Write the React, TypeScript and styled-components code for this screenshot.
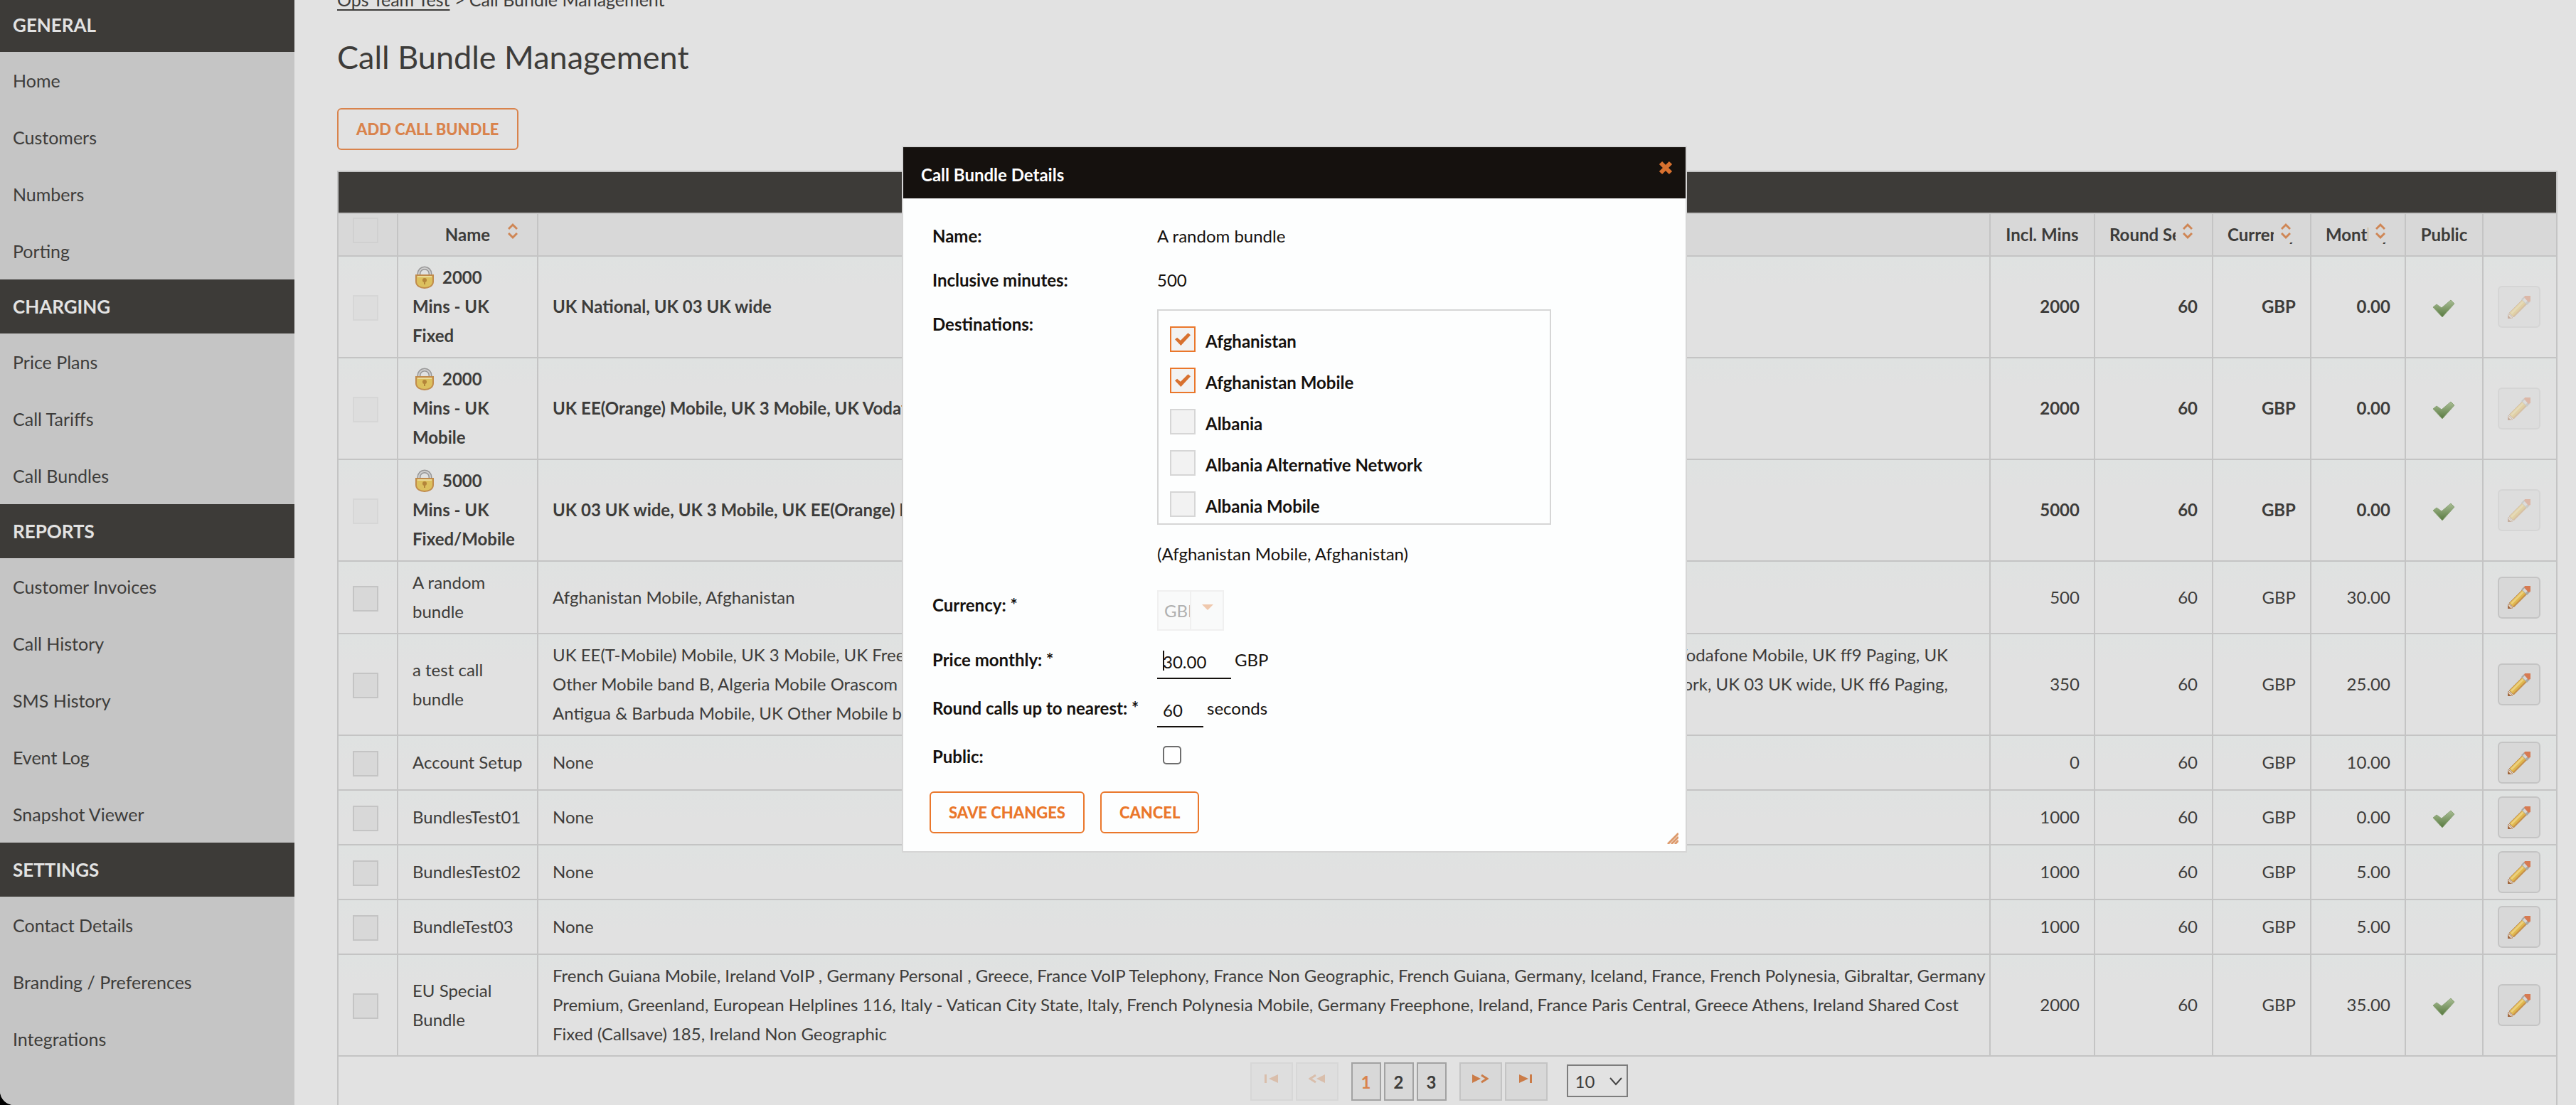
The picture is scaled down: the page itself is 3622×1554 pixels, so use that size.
import React from 'react';
import styled, { createGlobalStyle, css } from 'styled-components';

const c = {
  page: '#e2e2e2',
  side: '#c5c5c5',
  dark: '#3d3b38',
  line: '#c4c4c4',
  head: '#d8d8d8',
  text: '#3d3c3a',
  orange: '#d9834c',
  ink: '#15110e',
  vivid: '#ea772b',
};

const GlobalStyle = createGlobalStyle`
  html, body { margin: 0; background: #000; overflow: hidden; }
  * { box-sizing: border-box; }
  body, button, input, select {
    font-family: Lato, "Liberation Sans", sans-serif;
    font-size: 24px;
  }
  body { color: ${c.text}; line-height: 41px; }
`;

const Shell = styled.div`
  position: relative;
  display: flex;
  height: 100vh;
  overflow: hidden;
  background: ${c.page};
  border-bottom-left-radius: 20px;
`;

const Sidebar = styled.nav`
  flex: none;
  width: 414px;
  margin-top: -3px;
  background: ${c.side};
`;

const SideHeading = styled.h2`
  margin: 0;
  padding: 0 18px;
  background: ${c.dark};
  color: ${c.page};
  font-size: 26px;
  line-height: 76px;
  text-transform: uppercase;
`;

const SideLink = styled.a`
  display: block;
  padding: 0 18px;
  color: inherit;
  font-size: 25px;
  line-height: 80px;
  text-decoration: none;
`;

const Main = styled.main`
  flex: 1;
  min-width: 0;
  margin-top: -21px;
  padding: 0 26px 0 60px;
`;

const Crumbs = styled.div`
  font-size: 25px;
  a { color: inherit; text-underline-offset: 4px; }
`;

const Title = styled.h1`
  margin: 30px 0 42px;
  font-size: 45px;
  font-weight: 400;
  line-height: 60px;
`;

const OutlineButton = styled.button<{ $vivid?: boolean }>`
  height: 59px;
  padding: 0 25px;
  background: transparent;
  border: 2px solid ${p => (p.$vivid ? c.vivid : c.orange)};
  border-radius: 6px;
  color: ${p => (p.$vivid ? c.vivid : c.orange)};
  font-size: 22px;
  font-weight: 900;
  text-transform: uppercase;
`;

const Table = styled.table`
  width: 100%;
  margin-top: 29px;
  table-layout: fixed;
  border-collapse: collapse;
`;

const Caption = styled.th`
  height: 59px;
  padding: 0;
  background: ${c.dark};
  border: 2px solid ${c.line};
`;

const HeadCell = styled.th<{ $align?: string }>`
  position: relative;
  height: 60px;
  padding: 0 20px 2px;
  overflow: hidden;
  background: ${c.head};
  border: 2px solid ${c.line};
  text-align: ${p => p.$align || 'center'};
  white-space: nowrap;
`;

const SortButton = styled.button`
  position: absolute;
  top: 0;
  right: 0;
  width: 51px;
  height: 40px;
  padding: 7px 0 0 10px;
  background: ${c.head};
  border: 0;
  text-align: left;
  svg { display: block; }
`;

const Row = styled.tr<{ $locked?: boolean }>`
  font-weight: ${p => (p.$locked ? 700 : 400)};
`;

const Cell = styled.td<{ $align?: string; $tight?: boolean }>`
  padding: ${p => (p.$tight ? '8px 20px' : '8px 20px 10px')};
  background: linear-gradient(#dfe2e1, #e1e1e1 40px);
  border: 2px solid ${c.line};
  text-align: ${p => p.$align || 'left'};
  svg, input { vertical-align: middle; }
`;

const Line = styled.span`
  display: flex;
  white-space: nowrap;
`;

const WideLine = styled(Line)`
  padding-right: 38px;
`;

const Lead = styled.span`
  flex: 1;
  min-width: 0;
  overflow: hidden;
`;

const LockedName = styled(Line)`
  align-items: center;
  gap: 12px;
  padding-left: 4px;
`;

const tick = css`
  &:checked { border-color: ${c.vivid}; }
  &:checked::after {
    content: "";
    width: 22px;
    height: 18px;
    background: #d8712f;
    clip-path: polygon(0 52%, 14% 38%, 36% 60%, 84% 2%, 100% 18%, 38% 100%);
  }
`;

const TickBox = styled.input<{ $bright?: boolean }>`
  appearance: none;
  display: inline-flex;
  align-items: center;
  justify-content: center;
  flex: none;
  width: 36px;
  height: 36px;
  margin: 0;
  background: ${p => (p.$bright ? '#f2f2f2' : '#d8d8d8')};
  border: 2px solid ${p => (p.$bright ? '#d6d6d6' : c.line)};
  &:disabled { opacity: 0.35; }
  ${tick}
`;

const EditButton = styled.button`
  display: flex;
  align-items: center;
  justify-content: center;
  width: 60px;
  height: 59px;
  padding: 0;
  background: ${c.head};
  border: 2px solid ${c.line};
  border-radius: 6px;
  &:disabled { opacity: 0.4; }
`;

const PagerCell = styled.td`
  height: 100px;
  padding: 8px 24px 0 0;
  border: 2px solid ${c.line};
  vertical-align: top;
`;

const Pager = styled.div`
  display: flex;
  justify-content: center;
  gap: 18px;
`;

const PagerGroup = styled.div`
  display: flex;
  gap: 4px;
`;

const PagerButton = styled.button<{ $page?: boolean; $current?: boolean }>`
  display: flex;
  align-items: center;
  justify-content: center;
  width: ${p => (p.$page ? 42 : 60)}px;
  height: 54px;
  padding: 0;
  background: ${c.head};
  border: 2px solid ${p => (p.$page ? '#a2a2a2' : c.line)};
  color: ${p => (p.$current ? c.orange : c.text)};
  font-weight: 700;
  svg { margin-bottom: 8px; }
  &:disabled { opacity: 0.35; }
`;

const SizeBox = styled.div`
  position: relative;
  margin: 3px 0 0 9px;
  svg { position: absolute; top: 18px; right: 8px; pointer-events: none; }
`;

const SizeSelect = styled.select`
  appearance: none;
  display: block;
  width: 86px;
  height: 46px;
  padding: 0 10px;
  background: ${c.page};
  border: 2px solid #7d7d7d;
  border-radius: 0;
  color: ${c.text};
`;

const Overlay = styled.div`
  position: absolute;
  inset: 0;
  display: flex;
  align-items: flex-start;
  justify-content: center;
  padding: 205px 0 0 18px;
`;

const Dialog = styled.section`
  position: relative;
  width: 1104px;
  background: #fdfefe;
  border: 2px solid #d6d6d6;
  color: ${c.ink};
`;

const DialogBar = styled.header`
  display: flex;
  align-items: flex-start;
  justify-content: space-between;
  height: 72px;
  padding: 18px 18px 0 25px;
  background: ${c.ink};
  color: #fff;
`;

const DialogTitle = styled.h2`
  margin: 0;
  font-size: 24px;
`;

const CloseButton = styled.button`
  padding: 1px 0 0;
  background: none;
  border: 0;
  svg { display: block; }
`;

const Form = styled.form`
  padding: 32px 37px 25px;
`;

const Fields = styled.div`
  display: grid;
  grid-template-columns: 316px 554px;
  row-gap: 20px;
  padding-left: 4px;
  line-height: 42px;
`;

const FieldName = styled.label`
  font-weight: 700;
  white-space: nowrap;
`;

const CurrencyName = styled(FieldName)`
  margin-top: 10px;
`;

const Choices = styled.div`
  display: flex;
  flex-direction: column;
  gap: 16px;
  height: 303px;
  padding: 22px 16px 0;
  border: 2px solid #d6d6d6;
  overflow: hidden;
`;

const Choice = styled.label`
  display: flex;
  align-items: flex-start;
  gap: 14px;
  height: 42px;
  font-weight: 700;
  line-height: 42px;
`;

const CurrencyBox = styled.div`
  position: relative;
  width: 94px;
  margin-top: 10px;
  svg { position: absolute; top: 20px; right: 15px; }
  &::after {
    content: "";
    position: absolute;
    top: 2px;
    bottom: 2px;
    left: 46px;
    width: 2px;
    background: #f0f0f0;
  }
`;

const CurrencySelect = styled.select`
  appearance: none;
  display: block;
  width: 100%;
  height: 57px;
  padding: 0 46px 0 8px;
  background: #f9fafa;
  border: 2px solid #f0f0f0;
  border-radius: 0;
  color: #b0b0b0;
  opacity: 1;
`;

const Measure = styled.div`
  position: relative;
  display: flex;
  gap: 5px;
`;

const ShortInput = styled.input<{ $w: number }>`
  width: ${p => p.$w}px;
  height: 48px;
  padding: 0 8px;
  background: transparent;
  border: 0;
  border-bottom: 2px solid ${c.ink};
  color: ${c.ink};
  outline: 0;
`;

const Caret = styled.span`
  position: absolute;
  top: 8px;
  left: 8px;
  width: 2px;
  height: 28px;
  background: ${c.ink};
`;

const PublicBox = styled.input`
  appearance: none;
  width: 26px;
  height: 26px;
  margin: 6px 8px;
  background: #fff;
  border: 2px solid #6e6e6e;
  border-radius: 5px;
`;

const Actions = styled.div`
  display: flex;
  gap: 22px;
  margin-top: 28px;
`;

const Grip = styled.svg`
  position: absolute;
  right: 10px;
  bottom: 10px;
`;

const SortIcon = () => (
  <svg width="14" height="40" viewBox="0 0 14 40" fill="none" stroke="#cf8655" strokeWidth="3">
    <path d="M1 16 7 10 13 16M1 22 7 28 13 22" transform="translate(0 -2)" />
  </svg>
);

const LockIcon = () => (
  <svg width="26" height="32" viewBox="0 0 26 32">
    <path d="M5 15V11a8 8 0 0 1 16 0v4" fill="none" stroke="#979797" strokeWidth="5" />
    <path d="M5 15V11a8 8 0 0 1 16 0v4" fill="none" stroke="#cfcfcf" strokeWidth="2" />
    <path d="M1 13h24v9c0 6-6 9-12 9S1 28 1 22z" fill="#dcc05e" stroke="#c08b4c" strokeWidth="2" />
    <path d="M3 15h20" stroke="#eadb9a" strokeWidth="2" />
    <circle cx="13" cy="20" r="3" fill="#b4853a" />
    <path d="M12 21h2v5h-2z" fill="#b4853a" />
  </svg>
);

const CheckIcon = () => (
  <svg width="32" height="26" viewBox="0 0 32 26">
    <defs>
      <linearGradient id="leaf" x1="0" y1="0" x2="0" y2="1">
        <stop offset="0" stopColor="#a9bd95" />
        <stop offset="1" stopColor="#57793f" />
      </linearGradient>
    </defs>
    <path d="M1 11 6 7l7 5L26 1l5 5L14 25z" fill="url(#leaf)" stroke="#8ba376" strokeLinejoin="round" />
  </svg>
);

const PencilIcon = () => (
  <svg width="32" height="32" viewBox="0 0 32 32">
    <path d="M0 32 1 25 7 31z" fill="#e9d6c0" stroke="#b98f6c" />
    <path d="M0 32v-5l5 5z" fill="#a0673f" />
    <path d="M2 24 21 5l6 6L8 30z" fill="#dfb74e" stroke="#bd9266" />
    <path d="M4 24 21 7l2 2L6 26z" fill="#ecd07d" />
    <path d="M7 29 25 11l2 1L9 30z" fill="#c68f4a" />
    <path d="M19 5l4-4 8 8-4 4z" fill="#a8a8a4" />
    <path d="M21 6l3-3 4 4-3 3z" fill="#d6d6d4" />
    <path d="M24 0h8v8l-3 1-6-7z" fill="#d67a52" />
  </svg>
);

const ChevronIcon = () => (
  <svg width="18" height="12" viewBox="0 0 18 12" fill="none" stroke="#444" strokeWidth="2">
    <path d="M1 1 9 10 17 1" />
  </svg>
);

const pagerPaths: Record<string, React.ReactNode> = {
  first: <><path d="M0 1h3v12H0z" /><path d="M19 1v12L6 7z" /></>,
  prev: <><path d="M23 1v12L11 7z" /><path d="M10 2 2 7l8 5" fill="none" stroke="#cb7c48" strokeWidth="3" /></>,
  next: <><path d="M0 1v12l12-6z" /><path d="M13 2l8 5-8 5" fill="none" stroke="#cb7c48" strokeWidth="3" /></>,
  last: <><path d="M0 1v12l13-6z" /><path d="M15 1h3v12h-3z" /></>,
};

const PagerIcon = ({ kind }: { kind: string }) => (
  <svg width={kind === 'first' || kind === 'last' ? 19 : 23} height="14" fill="#cb7c48">
    {pagerPaths[kind]}
  </svg>
);

const menu = [
  { title: 'General', items: ['Home', 'Customers', 'Numbers', 'Porting'] },
  { title: 'Charging', items: ['Price Plans', 'Call Tariffs', 'Call Bundles'] },
  { title: 'Reports', items: ['Customer Invoices', 'Call History', 'SMS History', 'Event Log', 'Snapshot Viewer'] },
  { title: 'Settings', items: ['Contact Details', 'Branding / Preferences', 'Integrations'] },
];

type Bundle = {
  name: string[];
  dest: (string | [string, string])[];
  mins: number;
  price: string;
  pub?: boolean;
  locked?: boolean;
};

const bundles: Bundle[] = [
  { name: ['2000', 'Mins - UK', 'Fixed'], dest: ['UK National, UK 03 UK wide'], mins: 2000, price: '0.00', pub: true, locked: true },
  { name: ['2000', 'Mins - UK', 'Mobile'], dest: ['UK EE(Orange) Mobile, UK 3 Mobile, UK Vodafone Mobile'], mins: 2000, price: '0.00', pub: true, locked: true },
  { name: ['5000', 'Mins - UK', 'Fixed/Mobile'], dest: ['UK 03 UK wide, UK 3 Mobile, UK EE(Orange) Mobile'], mins: 5000, price: '0.00', pub: true, locked: true },
  { name: ['A random', 'bundle'], dest: ['Afghanistan Mobile, Afghanistan'], mins: 500, price: '30.00' },
  {
    name: ['a test call', 'bundle'],
    dest: [
      ['UK EE(T-Mobile) Mobile, UK 3 Mobile, UK Freephone', 'Vodafone Mobile, UK ff9 Paging, UK'],
      ['Other Mobile band B, Algeria Mobile Orascom (', 'Network, UK 03 UK wide, UK ff6 Paging,'],
      'Antigua & Barbuda Mobile, UK Other Mobile band',
    ],
    mins: 350,
    price: '25.00',
  },
  { name: ['Account Setup'], dest: ['None'], mins: 0, price: '10.00' },
  { name: ['BundlesTest01'], dest: ['None'], mins: 1000, price: '0.00', pub: true },
  { name: ['BundlesTest02'], dest: ['None'], mins: 1000, price: '5.00' },
  { name: ['BundleTest03'], dest: ['None'], mins: 1000, price: '5.00' },
  {
    name: ['EU Special', 'Bundle'],
    dest: [
      'French Guiana Mobile, Ireland VoIP , Germany Personal , Greece, France VoIP Telephony, France Non Geographic, French Guiana, Germany, Iceland, France, French Polynesia, Gibraltar, Germany',
      'Premium, Greenland, European Helplines 116, Italy - Vatican City State, Italy, French Polynesia Mobile, Germany Freephone, Ireland, France Paris Central, Greece Athens, Ireland Shared Cost',
      'Fixed (Callsave) 185, Ireland Non Geographic',
    ],
    mins: 2000,
    price: '35.00',
    pub: true,
  },
];

const destinations = [
  { name: 'Afghanistan', on: true },
  { name: 'Afghanistan Mobile', on: true },
  { name: 'Albania', on: false },
  { name: 'Albania Alternative Network', on: false },
  { name: 'Albania Mobile', on: false },
];

const BundleRow = ({ b }: { b: Bundle }) => (
  <Row $locked={b.locked}>
    <Cell>
      <TickBox type="checkbox" disabled={b.locked} aria-label={`Select ${b.name.join(' ')}`} />
    </Cell>
    <Cell>
      {b.name.map((part, i) =>
        b.locked && i === 0 ? (
          <LockedName key={i}><LockIcon />{part}</LockedName>
        ) : (
          <Line key={i}>{part}</Line>
        ),
      )}
    </Cell>
    <Cell>
      {b.dest.map((line, i) =>
        typeof line === 'string' ? (
          <Line key={i}>{line}</Line>
        ) : (
          <WideLine key={i}><Lead>{line[0]}</Lead><span>{line[1]}</span></WideLine>
        ),
      )}
    </Cell>
    <Cell $align="right">{b.mins}</Cell>
    <Cell $align="right">60</Cell>
    <Cell $align="right">GBP</Cell>
    <Cell $align="right">{b.price}</Cell>
    <Cell $align="center">{b.pub && <CheckIcon />}</Cell>
    <Cell $tight>
      <EditButton disabled={b.locked} aria-label="Edit bundle"><PencilIcon /></EditButton>
    </Cell>
  </Row>
);

const SortHead = ({ label, align }: { label: string; align?: string }) => (
  <HeadCell $align={align}>
    {label}
    <SortButton aria-label={`Sort by ${label}`}><SortIcon /></SortButton>
  </HeadCell>
);

const BundleDialog = () => (
  <Dialog role="dialog" aria-labelledby="dialog-title">
    <DialogBar>
      <DialogTitle id="dialog-title">Call Bundle Details</DialogTitle>
      <CloseButton aria-label="Close">
        <svg width="20" height="20" viewBox="0 0 20 20" stroke="#d8712f" strokeWidth="6">
          <path d="M3 3 17 17M17 3 3 17" />
        </svg>
      </CloseButton>
    </DialogBar>
    <Form onSubmit={e => e.preventDefault()}>
      <Fields>
        <FieldName as="span">Name:</FieldName>
        <span>A random bundle</span>
        <FieldName as="span">Inclusive minutes:</FieldName>
        <span>500</span>
        <FieldName as="span">Destinations:</FieldName>
        <Choices>
          {destinations.map(d => (
            <Choice key={d.name}>
              <TickBox $bright type="checkbox" defaultChecked={d.on} />
              {d.name}
            </Choice>
          ))}
        </Choices>
        <span />
        <span>(Afghanistan Mobile, Afghanistan)</span>
        <CurrencyName htmlFor="currency">Currency: *</CurrencyName>
        <CurrencyBox>
          <CurrencySelect id="currency" disabled><option>GBP</option></CurrencySelect>
          <svg width="16" height="8"><path d="M0 0h16L8 8z" fill="#efc8ad" /></svg>
        </CurrencyBox>
        <FieldName htmlFor="price">Price monthly: *</FieldName>
        <Measure>
          <ShortInput id="price" $w={104} defaultValue="30.00" />
          <Caret />
          <span>GBP</span>
        </Measure>
        <FieldName htmlFor="round">Round calls up to nearest: *</FieldName>
        <Measure>
          <ShortInput id="round" $w={65} defaultValue="60" />
          <span>seconds</span>
        </Measure>
        <FieldName htmlFor="public">Public:</FieldName>
        <Measure><PublicBox id="public" type="checkbox" /></Measure>
      </Fields>
      <Actions>
        <OutlineButton $vivid type="submit">Save changes</OutlineButton>
        <OutlineButton $vivid type="button">Cancel</OutlineButton>
      </Actions>
    </Form>
    <Grip width="16" height="16" viewBox="0 0 16 16" stroke="#dd9a6c" strokeWidth="3">
      <path d="M1 16 16 1M6 16 16 6M11 16 16 11" />
    </Grip>
  </Dialog>
);

export default function App() {
  return (
    <>
      <GlobalStyle />
      <Shell>
        <Sidebar>
          {menu.map(group => (
            <div key={group.title}>
              <SideHeading>{group.title}</SideHeading>
              {group.items.map(item => <SideLink key={item} href="#">{item}</SideLink>)}
            </div>
          ))}
        </Sidebar>
        <Main>
          <Crumbs><a href="#">Ops Team Test</a> &gt; Call Bundle Management</Crumbs>
          <Title>Call Bundle Management</Title>
          <OutlineButton>Add call bundle</OutlineButton>
          <Table>
            <colgroup>
              <col style={{ width: 84 }} />
              <col style={{ width: 197 }} />
              <col />
              <col style={{ width: 147 }} />
              <col style={{ width: 166 }} />
              <col style={{ width: 138 }} />
              <col style={{ width: 133 }} />
              <col style={{ width: 109 }} />
              <col style={{ width: 104 }} />
            </colgroup>
            <thead>
              <tr><Caption colSpan={9} /></tr>
              <tr>
                <HeadCell $align="left"><TickBox type="checkbox" disabled aria-label="Select all" /></HeadCell>
                <SortHead label="Name" />
                <HeadCell />
                <HeadCell>Incl. Mins</HeadCell>
                <SortHead label="Round Secs" align="left" />
                <SortHead label="Currency" align="left" />
                <SortHead label="Monthly" align="left" />
                <HeadCell>Public</HeadCell>
                <HeadCell />
              </tr>
            </thead>
            <tbody>
              {bundles.map((b, i) => <BundleRow key={i} b={b} />)}
            </tbody>
            <tfoot>
              <tr>
                <PagerCell colSpan={9}>
                  <Pager>
                    <PagerGroup>
                      <PagerButton disabled aria-label="First page"><PagerIcon kind="first" /></PagerButton>
                      <PagerButton disabled aria-label="Previous page"><PagerIcon kind="prev" /></PagerButton>
                    </PagerGroup>
                    <PagerGroup>
                      <PagerButton $page $current>1</PagerButton>
                      <PagerButton $page>2</PagerButton>
                      <PagerButton $page>3</PagerButton>
                    </PagerGroup>
                    <PagerGroup>
                      <PagerButton aria-label="Next page"><PagerIcon kind="next" /></PagerButton>
                      <PagerButton aria-label="Last page"><PagerIcon kind="last" /></PagerButton>
                    </PagerGroup>
                    <SizeBox>
                      <SizeSelect aria-label="Rows per page"><option>10</option></SizeSelect>
                      <ChevronIcon />
                    </SizeBox>
                  </Pager>
                </PagerCell>
              </tr>
            </tfoot>
          </Table>
        </Main>
        <Overlay><BundleDialog /></Overlay>
      </Shell>
    </>
  );
}
